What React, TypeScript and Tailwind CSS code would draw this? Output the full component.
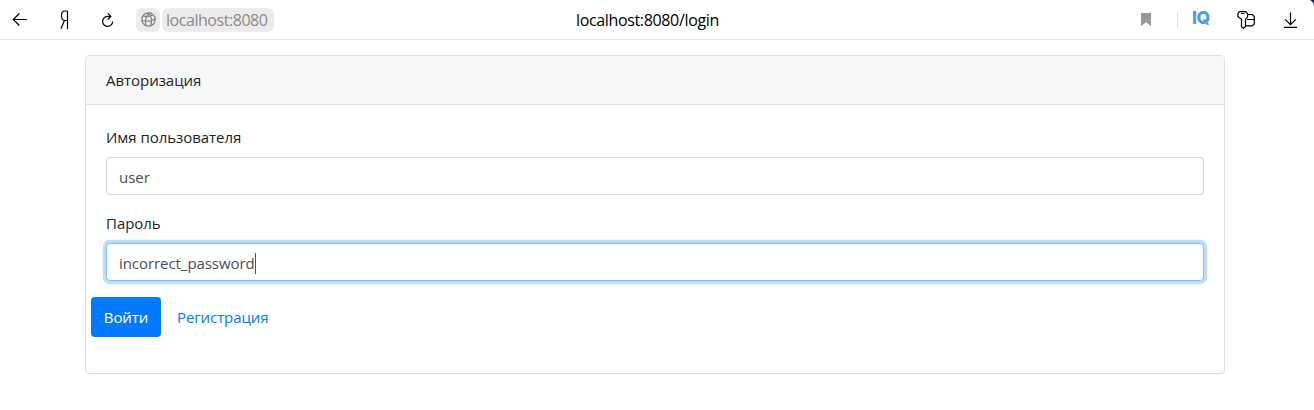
import type { ReactNode } from "react";

function Toolbar() {
  return (
    <header className="relative flex h-10 items-center border-b border-[#e5e5e5] bg-white text-black">
      <svg className="ml-3 h-4 w-4" viewBox="0 0 16 16" fill="none" stroke="currentColor" strokeWidth="1.2">
        <path d="M15 7.5H1.3M7.3 1.5l-6 6 6 6" />
      </svg>
      <svg className="ml-8 h-5 w-3" viewBox="0 0 12 20" fill="none" stroke="currentColor" strokeWidth="1.2">
        <path d="M7.5 1v18M7.5 1H5C2.8 1 1.5 2.8 1.5 5.4S2.7 10.5 5 10.5h2.5M4.4 10.6 1 18.8" />
      </svg>
      <svg className="ml-[29px] h-4 w-3.5" viewBox="0 0 14 16" fill="none" stroke="currentColor" strokeWidth="1.2">
        <path d="M9.5 4.4H6.3a5 5 0 1 0 5.3 5M6.8 1.3l3.1 3.1-3.1 3.1" />
      </svg>
      <div className="ml-[21px] flex h-6 w-6 items-center justify-center rounded-md bg-[#ececec] text-[#808080]">
        <svg className="h-[15px] w-[15px]" viewBox="0 0 15 15" fill="none" stroke="currentColor" strokeWidth="1.2">
          <circle cx="7.5" cy="7.5" r="6.7" />
          <path d="M1 8.2c4.5 1.5 9.3 1 13-1.2M8.5 1C5 3.5 3.6 9 5 13.7M7 1.2c3.5 2.5 4.2 7.5 2.6 12.7M2.5 4c3 .9 6.5.4 9-1" />
        </svg>
      </div>
      <div className="ml-0.5 flex h-6 w-28 items-center rounded-md bg-[#ececec] pl-1 text-base text-[#8a8a8a]">
        <span className="tracking-[-0.45px]">localhost:8080</span>
      </div>
      <div className="absolute top-2 left-[576px] text-base leading-6 tracking-[-0.35px]">localhost:8080/login</div>
      <div className="ml-auto flex items-center">
        <svg className="h-[13px] w-[10px] text-[#999999]" viewBox="0 0 10 13" fill="currentColor">
          <path d="M0 0h10v13L5 9.2 0 13z" />
        </svg>
        <div className="ml-[26px] h-4 w-px bg-[#e2e2e2]" />
        <span className="ml-[14px] w-[19px] pb-[3px] font-['Inter',sans-serif] text-[17.5px] leading-5 font-extrabold tracking-[-0.4px] text-[#519fda]">
          IQ
        </span>
        <svg className="ml-[26px] h-[18px] w-[18px]" viewBox="0 0 18 18" fill="none" stroke="currentColor" strokeWidth="1.2">
          <path d="M2.5.7h6.3l1.8 2.1v3L8.5 8.2v7.3l-2 1.8-2-1.6V8.2L.9 5.5V2.4L2.5.7ZM4 2.5h3.5M10.6 3.5h4.8l1.9 2v7.4l-2.1 2H8.5M10 8.5h7.2" />
        </svg>
        <svg className="mr-[17px] ml-[29px] h-4 w-[13px]" viewBox="0 0 13 16" fill="none" stroke="currentColor" strokeWidth="1.2">
          <path d="M6.5.5v12M1.2 7.3l5.3 5.3 5.3-5.3M0 15.4h13" />
        </svg>
      </div>
      <svg className="absolute top-0 right-0 h-1.5 w-1" viewBox="0 0 4 6" fill="#20264b">
        <path d="M0 0h4v6C3.8 3.5 2.5 1.4 0 0z" />
      </svg>
    </header>
  );
}

function Field({ label, focused = false, children }: { label: string; focused?: boolean; children: ReactNode }) {
  return (
    <div className="mb-4">
      <div className="mb-2 h-6">{label}</div>
      <div
        role="textbox"
        className={
          "flex h-[38px] items-center rounded border bg-white px-3 pt-0.5 text-[#495057] " +
          (focused ? "border-[#80bdff] shadow-[0_0_0_3.2px_rgba(0,123,255,0.25)]" : "border-[#ced4da]")
        }
      >
        {children}
      </div>
    </div>
  );
}

export default function App() {
  return (
    <div className="h-[410px] overflow-hidden bg-white font-['Open_Sans','Noto_Sans',sans-serif] text-[15px] leading-6 tracking-[-0.04px] text-[#212529]">
      <Toolbar />
      <main className="mt-[15px] ml-[85px] h-[319px] w-[1140px] rounded border border-[#dfdfdf] bg-white">
        <div className="h-[49px] rounded-t-[3px] border-b border-[#dfdfdf] bg-[#f7f7f7] px-5 py-3">
          <span>Авторизация</span>
        </div>
        <form className="p-5">
          <Field label="Имя пользователя">
            <span>user</span>
          </Field>
          <Field label="Пароль" focused>
            <span className="tracking-[-0.06px]">incorrect_password</span>
            <span className="h-[21px] w-px bg-[#495057]" />
          </Field>
          <div className="-ml-[15px] flex items-center tracking-[-0.1px]">
            <button type="button" className="h-10 w-[70px] rounded bg-[#007bff] text-white">Войти</button>
            <a className="ml-4 text-[#007bff]">Регистрация</a>
          </div>
        </form>
      </main>
    </div>
  );
}
